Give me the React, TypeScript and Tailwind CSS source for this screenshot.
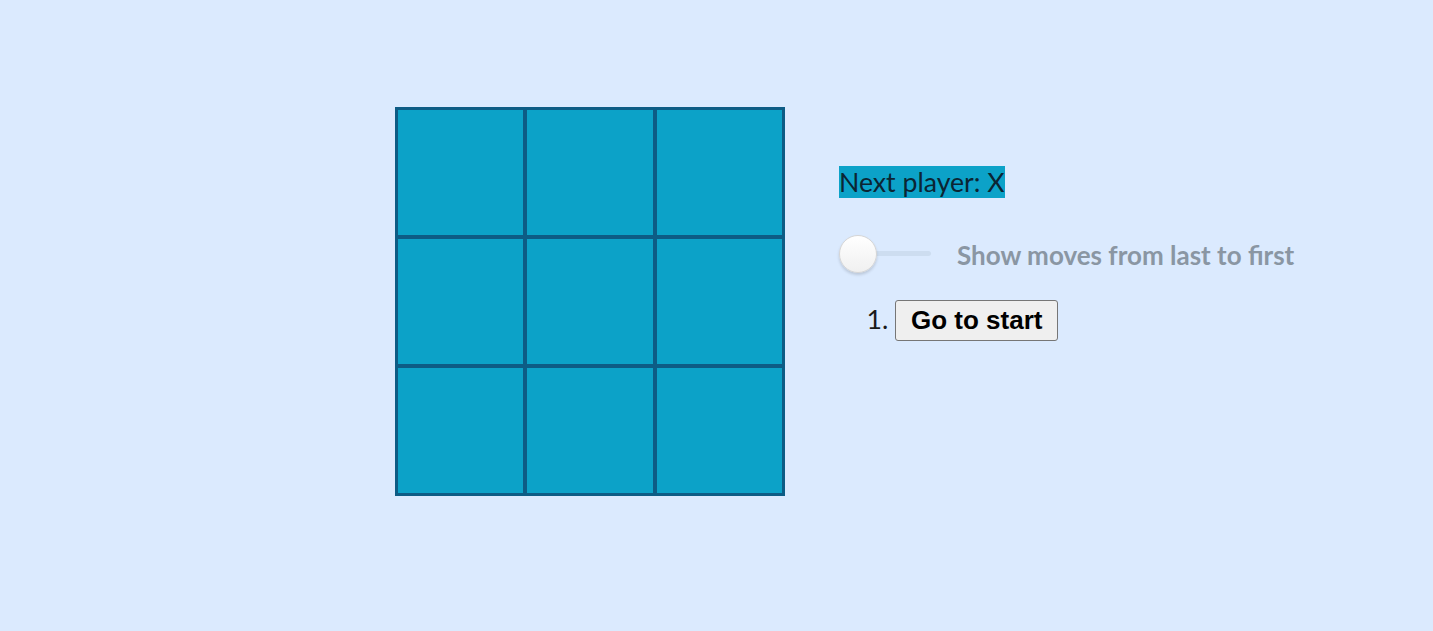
import { useState } from "react";

type Cell = "X" | "O" | null;

function Board({ squares, onPlay }: { squares: Cell[]; onPlay: (i: number) => void }) {
  const cols = ["w-[125px]", "w-[126px]", "w-[125px]"];
  return (
    <div className="grid grid-cols-[125px_126px_125px] grid-rows-[125px_125px_125px] gap-[4px] border-[3px] border-[#0d5c85] bg-[#0d5c85] shrink-0">
      {squares.map((v, i) => (
        <button
          key={i}
          type="button"
          onClick={() => onPlay(i)}
          className={"h-[125px] bg-[#0ca2c8] text-5xl font-bold text-[#0b2533] " + cols[i % 3]}
        >
          {v}
        </button>
      ))}
    </div>
  );
}

export default function App() {
  const [history, setHistory] = useState<Cell[][]>([Array(9).fill(null)]);
  const [step, setStep] = useState(0);
  const [reversed, setReversed] = useState(false);
  const squares = history[step];
  const xNext = step % 2 === 0;

  const play = (i: number) => {
    if (squares[i]) return;
    const next = squares.slice();
    next[i] = xNext ? "X" : "O";
    const h = [...history.slice(0, step + 1), next];
    setHistory(h);
    setStep(h.length - 1);
  };

  const moves = history.map((_, m) => m);
  if (reversed) moves.reverse();

  return (
    <div className="min-h-screen w-full bg-[#dbeafe] font-['Lato',sans-serif] text-[26.67px] text-[#0b2533]">
      <div className="flex items-start pl-[395px] pt-[107px]">
        <Board squares={squares} onPlay={play} />
        <div className="ml-[54px] pt-[59px]">
          <div className="leading-none">
            <span className="inline-block bg-[#0ca2c8] leading-[32px] text-[#0b2533]">
              Next player: {xNext ? "X" : "O"}
            </span>
          </div>
          <label className="mt-[35px] flex items-center cursor-pointer">
            <button
              type="button"
              onClick={() => setReversed(!reversed)}
              className="relative h-[38px] w-[92px] shrink-0"
            >
              <span className="absolute left-[10px] right-0 top-[16px] h-[5px] rounded-full bg-[#cdddf0]" />
              <span
                className={
                  "absolute top-0 h-[38px] w-[38px] rounded-full border border-[#d6d6d6] bg-gradient-to-b from-white to-[#f0f0f0] shadow-[0_2px_3px_rgba(0,0,0,0.15)] " +
                  (reversed ? "left-[54px]" : "left-0")
                }
              />
            </button>
            <span className="ml-[26px] pt-[3px] text-[26px] font-bold text-[#8a96a3]">Show moves from last to first</span>
          </label>
          <ol className="mt-[24px] list-decimal pl-[56px] text-[#1a1a1a]">
            {moves.map((m) => (
              <li key={m}>
                <button
                  type="button"
                  onClick={() => setStep(m)}
                  className="rounded-[3px] border border-[#767676] bg-[#efefef] px-[15px] py-[5px] font-['Liberation_Sans',Arial,sans-serif] text-[26px] font-bold leading-[29px] text-black"
                >
                  {m === 0 ? "Go to start" : "Go to move #" + m}
                </button>
              </li>
            ))}
          </ol>
        </div>
      </div>
    </div>
  );
}
